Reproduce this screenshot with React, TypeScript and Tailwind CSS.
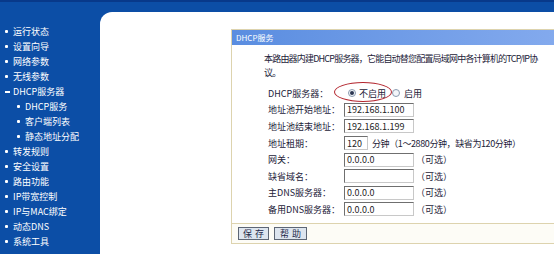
import React from "react";

const font = { fontFamily: '"Noto Sans CJK SC", "Noto Sans", sans-serif' };

type Item = { label: string; sub?: boolean; open?: boolean };
const menu: Item[] = [
  { label: "运行状态" },
  { label: "设置向导" },
  { label: "网络参数" },
  { label: "无线参数" },
  { label: "DHCP服务器", open: true },
  { label: "DHCP服务", sub: true },
  { label: "客户端列表", sub: true },
  { label: "静态地址分配", sub: true },
  { label: "转发规则" },
  { label: "安全设置" },
  { label: "路由功能" },
  { label: "IP带宽控制" },
  { label: "IP与MAC绑定" },
  { label: "动态DNS" },
  { label: "系统工具" },
];

function TextInput({ value, w = "w-[70px]" }: { value: string; w?: string }) {
  return (
    <div
      className={`${w} h-[14px] bg-white border border-t-[#6f6f6f] border-l-[#6f6f6f] border-r-[#c8c8c8] border-b-[#c8c8c8] flex items-center pl-[2px] text-[9px] leading-none text-[#222]`}
    >
      {value}
    </div>
  );
}

function Radio({ checked }: { checked?: boolean }) {
  return (
    <span className="w-[8px] h-[8px] rounded-full border border-[#8a9bb0] bg-[#f3f6fa] flex items-center justify-center">
      {checked && <span className="w-[4px] h-[4px] rounded-full bg-[#2a3550]" />}
    </span>
  );
}

function Row({ label, children }: { label: string; children: React.ReactNode }) {
  return (
    <div className="h-[16.6px] flex items-center">
      <div className="w-[76px] text-[9px] leading-none text-[#1c2238]">{label}</div>
      {children}
    </div>
  );
}

export default function App() {
  return (
    <div
      className="w-[554px] h-[254px] overflow-hidden bg-[#0c4ea6] border-t-2 border-[#08398a] flex"
      style={font}
    >
      <div className="w-[100px] shrink-0 pt-[22px] flex flex-col">
        {menu.map((m) => (
          <div
            key={m.label}
            className={`h-[15px] flex items-center text-white text-[9px] leading-none ${m.sub ? "pl-[17px]" : "pl-[5px]"}`}
          >
            {m.open ? (
              <span className="w-[5px] h-[2px] bg-white mr-[3px]" />
            ) : (
              <span className="w-[3px] h-[3px] bg-white rounded-[1px] mr-[5px]" />
            )}
            <span>{m.label}</span>
          </div>
        ))}
      </div>
      <div className="flex-1 mt-[10px] bg-white rounded-tl-[12px] pl-[131px] pt-[17px]">
        <div className="w-[340px] border border-[#ddd3ae] bg-white">
          <div className="h-[15px] bg-gradient-to-r from-[#5a8de0] to-[#85abee] flex items-center pl-[4px] text-white text-[8px] leading-none">
            DHCP服务
          </div>
          <div className="pl-[32px] pt-[7px] text-[9px] text-[#1c2238]">
            <div className="leading-[14px] tracking-[-0.8px] whitespace-nowrap">
              本路由器内建DHCP服务器，它能自动替您配置局域网中各计算机的TCP/IP协
              <br />
              议。
            </div>
            <div className="pl-[4px] mt-[5px] pb-[5px]">
              <Row label="DHCP服务器：">
                <div className="relative flex items-center ml-[4px]">
                  <span className="absolute left-[-14px] top-[-7px] w-[58px] h-[20px] rounded-[50%] border border-[#b3262e]" />
                  <Radio checked />
                  <span className="ml-[3px] leading-none">不启用</span>
                  <span className="ml-[6px]">
                    <Radio />
                  </span>
                  <span className="ml-[4px] leading-none">启用</span>
                </div>
              </Row>
              <Row label="地址池开始地址：">
                <TextInput value="192.168.1.100" />
              </Row>
              <Row label="地址池结束地址：">
                <TextInput value="192.168.1.199" />
              </Row>
              <Row label="地址租期：">
                <TextInput value="120" w="w-[24px]" />
                <span className="ml-[4px] leading-none tracking-[-0.4px]">分钟（1～2880分钟，缺省为120分钟）</span>
              </Row>
              <Row label="网关：">
                <TextInput value="0.0.0.0" />
                <span className="ml-[2px] leading-none">（可选）</span>
              </Row>
              <Row label="缺省域名：">
                <TextInput value="" />
                <span className="ml-[2px] leading-none">（可选）</span>
              </Row>
              <Row label="主DNS服务器：">
                <TextInput value="0.0.0.0" />
                <span className="ml-[2px] leading-none">（可选）</span>
              </Row>
              <Row label="备用DNS服务器：">
                <TextInput value="0.0.0.0" />
                <span className="ml-[2px] leading-none">（可选）</span>
              </Row>
            </div>
          </div>
          <div className="border-t border-[#ddd3ae] bg-[#fdfcf6] h-[20px] flex items-center pl-[6px] gap-[5px]">
            <button className="w-[31px] h-[13px] border border-[#5d6675] bg-[#dde5ef] text-[9px] leading-none text-[#1f2a4a] tracking-[3px] pl-[3px] flex items-center justify-center">
              保存
            </button>
            <button className="w-[33px] h-[13px] border border-[#5d6675] bg-[#dde5ef] text-[9px] leading-none text-[#1f2a4a] tracking-[3px] pl-[3px] flex items-center justify-center">
              帮助
            </button>
          </div>
        </div>
      </div>
    </div>
  );
}
